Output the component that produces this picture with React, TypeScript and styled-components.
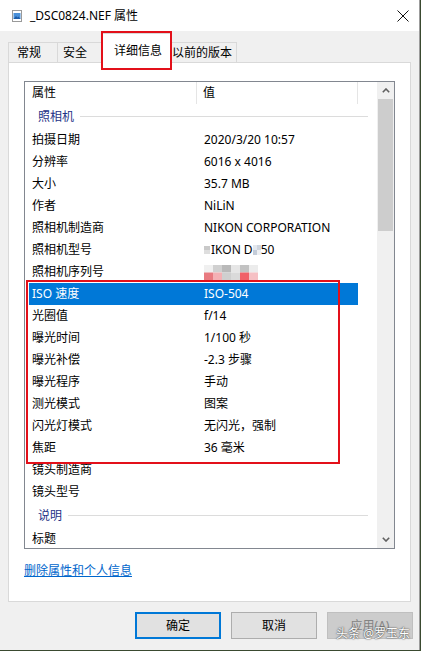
import React from 'react';
import styled, { createGlobalStyle } from 'styled-components';

const UI_FONT = `"Segoe UI", "Noto Sans", "Noto Sans CJK SC", sans-serif`;

const GlobalStyle = createGlobalStyle`
  html, body {
    margin: 0;
    padding: 0;
    background: #3a4a30;
    overflow: hidden;
  }
  * {
    box-sizing: border-box;
  }
`;

const Window = styled.div`
  position: relative;
  width: 420px;
  height: 650px;
  background: #f0f0f0;
  border-right: 1px solid #9c9c9c;
  display: flex;
  flex-direction: column;
  font-family: ${UI_FONT};
  font-size: 12px;
  color: #000;
`;

const TitleBar = styled.div`
  height: 31px;
  background: #fff;
  display: flex;
  align-items: center;
  padding: 0 10px 0 12px;
  flex-shrink: 0;

  .title {
    flex: 1;
    margin-left: 8px;
    line-height: 16px;
  }
`;

const TabStrip = styled.div`
  height: 31px;
  display: flex;
  align-items: flex-end;
  padding-left: 8px;
  position: relative;
  z-index: 1;
  flex-shrink: 0;
`;

const Tab = styled.div<{ $active?: boolean; $width: number; $pad: number }>`
  width: ${(p) => p.$width}px;
  height: ${(p) => (p.$active ? 30 : 20)}px;
  margin-left: -1px;
  margin-bottom: ${(p) => (p.$active ? -1 : 0)}px;
  padding-left: ${(p) => p.$pad}px;
  padding-top: ${(p) => (p.$active ? 5 : 0)}px;
  background: ${(p) => (p.$active ? '#fff' : '#f0f0f0')};
  border: 1px solid #d9d9d9;
  border-bottom: none;
  display: flex;
  align-items: center;
  white-space: nowrap;
  line-height: 16px;
  position: relative;
  z-index: ${(p) => (p.$active ? 2 : 1)};

  &:first-child {
    margin-left: 0;
  }
`;

const Panel = styled.div`
  height: 540px;
  margin: 0 8px;
  background: #fff;
  border: 1px solid #d9d9d9;
  padding: 18px 0 0 15px;
  flex-shrink: 0;
`;

const ListView = styled.div`
  width: 371px;
  height: 468px;
  border: 1px solid #828790;
  display: flex;
  overflow: hidden;
`;

const ListBody = styled.div`
  flex: 1;
  overflow: hidden;
`;

const Header = styled.div`
  height: 22px;
  display: flex;
`;

const HeaderCell = styled.div<{ $width: number; $pad: number }>`
  width: ${(p) => p.$width}px;
  padding-left: ${(p) => p.$pad}px;
  border-right: 1px solid #e5e5e5;
  line-height: 22px;
`;

const Group = styled.div`
  height: 25px;
  display: flex;
  align-items: center;
  padding: 0 9px 0 13px;
  color: #1e3287;

  span {
    line-height: 16px;
  }

  i {
    flex: 1;
    height: 1px;
    margin-left: 6px;
    background: #dcdcdc;
  }
`;

const Row = styled.div<{ $selected?: boolean }>`
  height: 22px;
  width: 329px;
  margin-left: 4px;
  display: grid;
  grid-template-columns: 175px 1fr;
  align-items: center;
  line-height: 22px;
  white-space: nowrap;
  background: ${(p) => (p.$selected ? '#0078d7' : 'transparent')};
  color: ${(p) => (p.$selected ? '#fff' : '#000')};

  .label {
    padding-left: 3px;
  }
  .value {
    display: flex;
    align-items: center;
  }
`;

const Scrollbar = styled.div`
  width: 17px;
  background: #f0f0f0;
  display: flex;
  flex-direction: column;
  flex-shrink: 0;
`;

const ArrowButton = styled.div`
  height: 17px;
  display: flex;
  align-items: center;
  justify-content: center;
  flex-shrink: 0;
`;

const Thumb = styled.div`
  height: 132px;
  margin: 0 1px;
  background: #cdcdcd;
  flex-shrink: 0;
`;

const Track = styled.div`
  flex: 1;
`;

const Link = styled.a`
  display: inline-block;
  margin-top: 14px;
  color: #0066cc;
  text-decoration: underline;
  line-height: 16px;
  cursor: pointer;
`;

const ButtonRow = styled.div`
  display: flex;
  justify-content: flex-end;
  gap: 10px;
  padding: 10px 6px 0 0;
`;

const Button = styled.div<{ $variant?: 'default' | 'disabled' }>`
  width: 86px;
  height: 27px;
  display: flex;
  align-items: center;
  justify-content: center;
  line-height: 16px;
  background: ${(p) => (p.$variant === 'disabled' ? '#cccccc' : '#e1e1e1')};
  border: ${(p) =>
    p.$variant === 'default'
      ? '2px solid #0078d7'
      : p.$variant === 'disabled'
      ? '1px solid #bfbfbf'
      : '1px solid #adadad'};
  color: ${(p) => (p.$variant === 'disabled' ? '#838383' : '#000')};
`;

const Annotation = styled.div<{ $left: number; $top: number; $w: number; $h: number }>`
  position: absolute;
  left: ${(p) => p.$left}px;
  top: ${(p) => p.$top}px;
  width: ${(p) => p.$w}px;
  height: ${(p) => p.$h}px;
  border: 2px solid #e3101a;
  pointer-events: none;
  z-index: 5;
`;

const Watermark = styled.div`
  position: absolute;
  right: 9px;
  bottom: 9px;
  font-size: 12px;
  line-height: 15px;
  color: #fff;
  text-shadow: 0 0 2px #555, 0 0 1px #333;
  z-index: 6;
`;

const FileIcon = () => (
  <svg width="10" height="12" viewBox="0 0 10 12">
    <rect x="0.5" y="0.5" width="9" height="11" fill="#fff" stroke="#9a9a9a" />
    <rect x="1.5" y="3" width="7" height="6" fill="#4a90d9" />
    <path d="M1.5 9 L4 6 L5.5 7.5 L6.5 6.5 L8.5 9 Z" fill="#1d5ca8" />
  </svg>
);

const CloseIcon = () => (
  <svg width="12" height="12" viewBox="0 0 12 12">
    <path d="M0.5 0.5 L11.5 11.5 M11.5 0.5 L0.5 11.5" stroke="#111" strokeWidth="1" />
  </svg>
);

const Chevron = ({ down }: { down?: boolean }) => (
  <svg width="8" height="5" viewBox="0 0 8 5">
    <path
      d={down ? 'M0.8 0.8 L4 4 L7.2 0.8' : 'M0.8 4.2 L4 1 L7.2 4.2'}
      fill="none"
      stroke="#606060"
      strokeWidth="1.6"
    />
  </svg>
);

const Mosaic = ({ cells, w, h }: { cells: string[][]; w: number; h: number }) => {
  const cw = w / cells[0].length;
  const ch = h / cells.length;
  return (
    <svg width={w} height={h} viewBox={`0 0 ${w} ${h}`}>
      {cells.map((row, r) =>
        row.map((c, i) => <rect key={`${r}-${i}`} x={i * cw} y={r * ch} width={cw} height={ch} fill={c} />)
      )}
    </svg>
  );
};

type Prop = { label: string; value: React.ReactNode; selected?: boolean };

const cameraRows: Prop[] = [
  { label: '拍摄日期', value: '2020/3/20 10:57' },
  { label: '分辨率', value: '6016 x 4016' },
  { label: '大小', value: '35.7 MB' },
  { label: '作者', value: 'NiLiN' },
  { label: '照相机制造商', value: 'NIKON CORPORATION' },
  {
    label: '照相机型号',
    value: (
      <>
        <Mosaic w={6} h={8} cells={[['#c9c9c9'], ['#dedede']]} />
        <span style={{ marginLeft: 1 }}>IKON D</span>
        <Mosaic w={8} h={10} cells={[['#e4e8ee', '#cfd5de'], ['#c4ccd8', '#eef0f3']]} />
        <span>50</span>
      </>
    ),
  },
  {
    label: '照相机序列号',
    value: (
      <Mosaic
        w={54}
        h={15}
        cells={[
          ['#f0f0f0', '#d0d0d0', '#b9b9b9', '#e6e6e6', '#c2c2c2', '#ececec'],
          ['#e87a80', '#f4b0b4', '#cfcfcf', '#dadada', '#f06068', '#f6c0c4'],
        ]}
      />
    ),
  },
  { label: 'ISO 速度', value: 'ISO-504', selected: true },
  { label: '光圈值', value: 'f/14' },
  { label: '曝光时间', value: '1/100 秒' },
  { label: '曝光补偿', value: '-2.3 步骤' },
  { label: '曝光程序', value: '手动' },
  { label: '测光模式', value: '图案' },
  { label: '闪光灯模式', value: '无闪光，强制' },
  { label: '焦距', value: '36 毫米' },
  { label: '镜头制造商', value: '' },
  { label: '镜头型号', value: '' },
];

const PropRow = ({ label, value, selected }: Prop) => (
  <Row $selected={selected}>
    <span className="label">{label}</span>
    <span className="value">{value}</span>
  </Row>
);

const App = () => {
  return (
    <>
      <GlobalStyle />
      <Window>
        <TitleBar>
          <FileIcon />
          <span className="title">_DSC0824.NEF 属性</span>
          <CloseIcon />
        </TitleBar>

        <TabStrip>
          <Tab $width={50} $pad={8}>常规</Tab>
          <Tab $width={46} $pad={5}>安全</Tab>
          <Tab $width={69} $pad={11} $active>详细信息</Tab>
          <Tab $width={67} $pad={1}>以前的版本</Tab>
        </TabStrip>

        <Panel>
          <ListView>
            <ListBody>
              <Header>
                <HeaderCell $width={172} $pad={7}>属性</HeaderCell>
                <HeaderCell $width={161} $pad={6}>值</HeaderCell>
              </Header>
              <Group>
                <span>照相机</span>
                <i />
              </Group>
              {cameraRows.map((r) => (
                <PropRow key={r.label} {...r} />
              ))}
              <Group>
                <span>说明</span>
                <i />
              </Group>
              <PropRow label="标题" value="" />
            </ListBody>
            <Scrollbar>
              <ArrowButton>
                <Chevron />
              </ArrowButton>
              <Thumb />
              <Track />
              <ArrowButton>
                <Chevron down />
              </ArrowButton>
            </Scrollbar>
          </ListView>
          <Link>删除属性和个人信息</Link>
        </Panel>

        <ButtonRow>
          <Button $variant="default">确定</Button>
          <Button>取消</Button>
          <Button $variant="disabled">应用(A)</Button>
        </ButtonRow>

        <Annotation $left={101} $top={31} $w={71} $h={39} />
        <Annotation $left={26} $top={280} $w={314} $h={184} />
        <Watermark>头条 @罗玉东</Watermark>
      </Window>
    </>
  );
};

export default App;
